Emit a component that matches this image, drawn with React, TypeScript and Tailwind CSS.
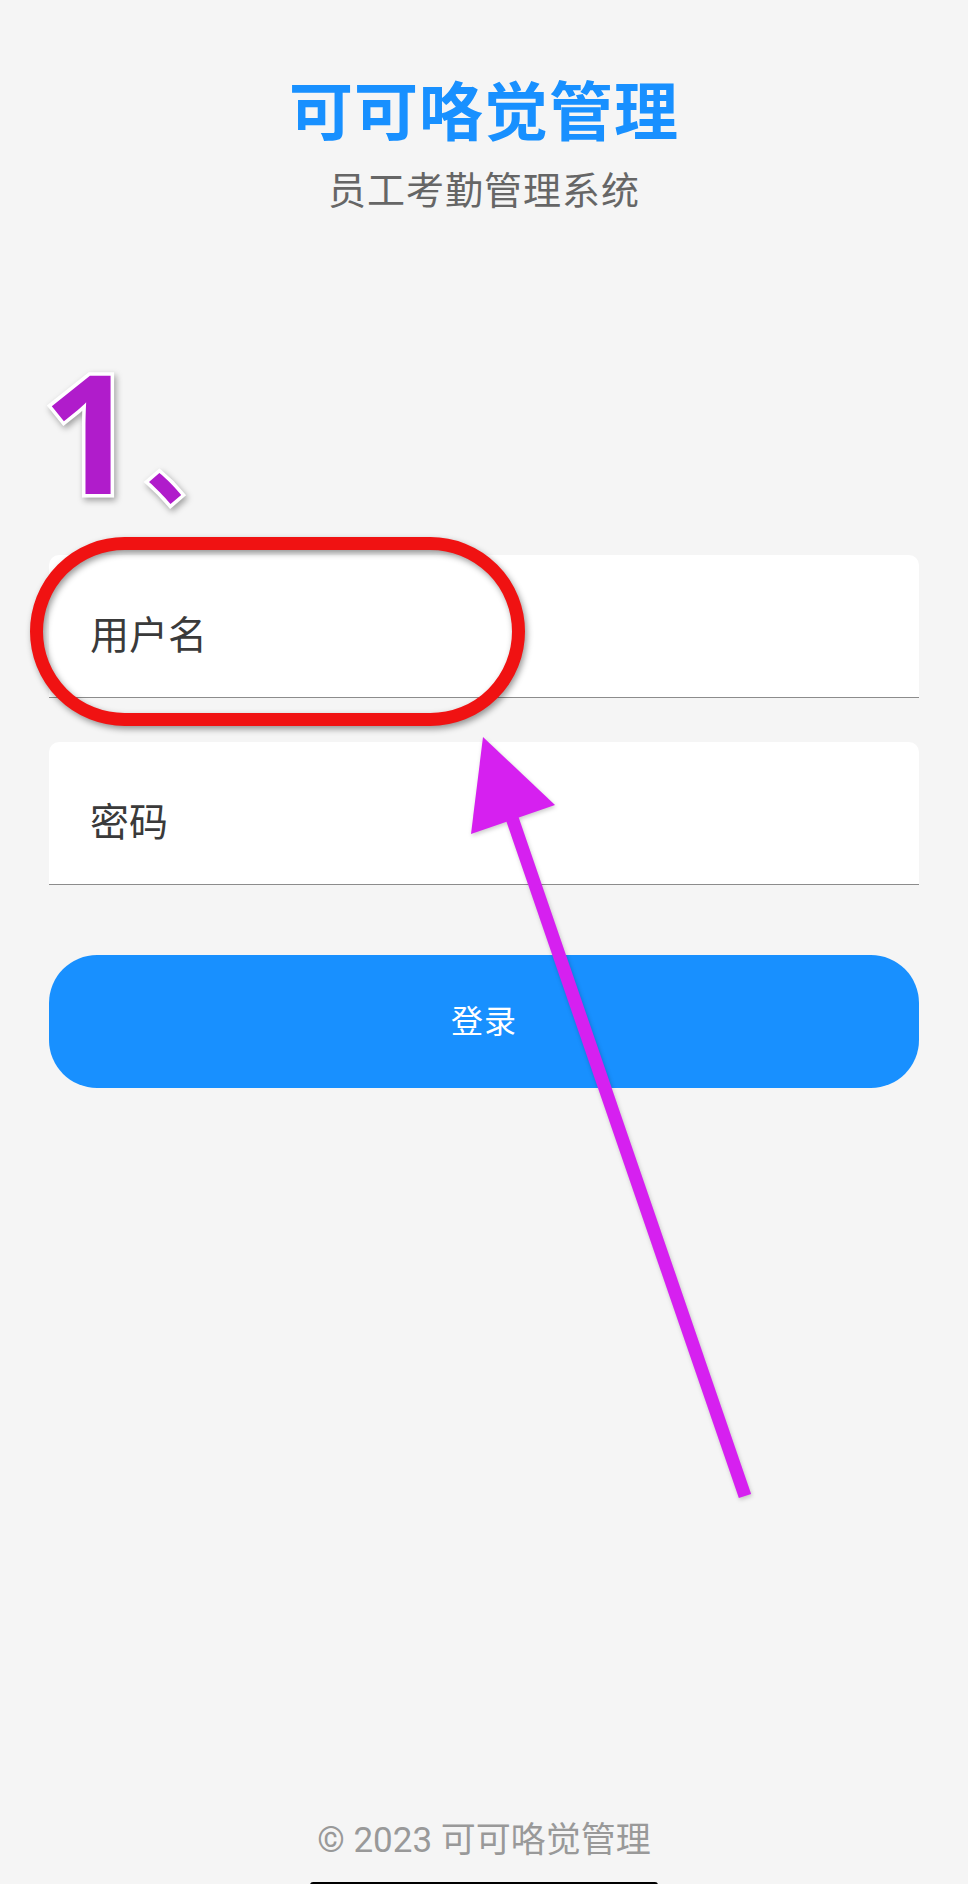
import React from 'react';

const cjk = "font-['Roboto','Noto_Sans_CJK_SC',sans-serif]";

const Field = ({ label }: { label: string }) => (
  <div className="flex h-[143px] items-center rounded-t-[10px] border-b border-[#8c8c8c] bg-white pt-[20px] pl-[41px]">
    <span className="text-[39px] leading-[46px] text-[#3a3a3a]">{label}</span>
  </div>
);

export default function App() {
  return (
    <div className={`relative flex h-[1884px] w-[968px] flex-col overflow-hidden bg-[#f5f5f5] ${cjk}`}>
      {/* header */}
      <div className="mt-[76px] flex flex-col items-center">
        <h1 className="text-[64px] font-bold leading-[76px] tracking-[1px] text-[#1890ff]">可可咯觉管理</h1>
        <p className="mt-[16px] text-[38px] leading-[46px] tracking-[1px] text-[#666666]">员工考勤管理系统</p>
      </div>

      {/* form */}
      <div className="mx-[49px] mt-[341px] flex flex-col">
        <Field label="用户名" />
        <div className="mt-[44px]">
          <Field label="密码" />
        </div>
        <button className="mt-[70px] flex h-[133px] items-center justify-center rounded-[48px] bg-[#1890ff] text-[32px] tracking-[1px] text-white">
          登录
        </button>
      </div>

      {/* footer */}
      <div className="mt-auto mb-[22px] flex justify-center">
        <span className="text-[35px] leading-[42px] text-[#999999]">© 2023 可可咯觉管理</span>
      </div>
      <div className="absolute bottom-[-4px] left-[310px] h-[6px] w-[348px] rounded-full bg-black" />

      {/* annotations */}
      <div className="pointer-events-none absolute left-[42px] top-[342px] flex items-start font-['Noto_Sans','Noto_Sans_CJK_SC',sans-serif] font-bold text-[#b01ccb] [-webkit-text-stroke:7px_white] [paint-order:stroke_fill] drop-shadow-[2px_3px_3px_rgba(0,0,0,0.35)]">
        <span className="text-[166px] leading-[176px]">1</span>
        <span className="mt-[62px] ml-[8px] text-[100px] leading-[108px]">、</span>
      </div>
      <div className="pointer-events-none absolute left-[30px] top-[537px] h-[189px] w-[495px] rounded-full border-[13px] border-[#f01212] drop-shadow-[2px_3px_3px_rgba(0,0,0,0.4)]" />
      <svg className="pointer-events-none absolute left-0 top-0 drop-shadow-[1px_2px_2px_rgba(0,0,0,0.2)]" width="968" height="1884" viewBox="0 0 968 1884">
        <line x1="510" y1="812" x2="745" y2="1496" stroke="#d620f0" strokeWidth="13" />
        <polygon points="483,737 471,834 555,805" fill="#d620f0" />
      </svg>
    </div>
  );
}
